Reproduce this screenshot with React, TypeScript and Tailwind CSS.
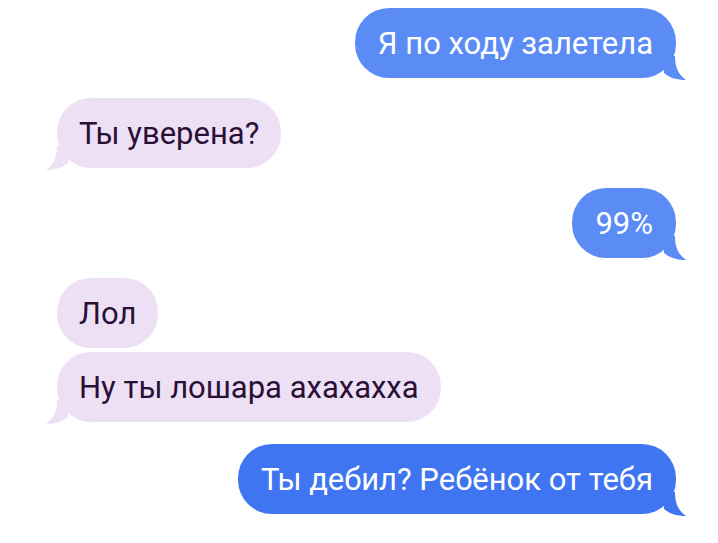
import React from "react";

const BLUE = "#5b8cf5";

function TailRight({ color }: { color: string }) {
  return (
    <svg
      className="absolute right-[-11px] bottom-[-2px]"
      width="24"
      height="24"
      viewBox="0 0 24 24"
    >
      <path d="M0 0 L12 0 C12 11 15 18 23 24 C14 24 7 22 1 17 Z" fill={color} />
    </svg>
  );
}

function TailLeft({ color }: { color: string }) {
  return (
    <svg
      className="absolute left-[-12px] bottom-[-2px] -scale-x-100"
      width="24"
      height="24"
      viewBox="0 0 24 24"
    >
      <path d="M0 0 L12 0 C12 11 15 18 23 24 C14 24 7 22 1 17 Z" fill={color} />
    </svg>
  );
}

function Out({ text, color, tail = true }: { text: string; color: string; tail?: boolean }) {
  return (
    <div className="flex justify-end pr-[42px]">
      <div
        className="relative h-[70px] rounded-[34px] px-[23px] flex items-center text-white text-[31px] leading-none"
        style={{ backgroundColor: color }}
      >
        <span className="relative z-10">{text}</span>
        {tail && <TailRight color={color} />}
      </div>
    </div>
  );
}

function In({ text, tail = true }: { text: string; tail?: boolean }) {
  return (
    <div className="flex justify-start pl-[57px]">
      <div className="relative h-[70px] rounded-[34px] px-[22px] flex items-center bg-[#ede0f4] text-[#2a0f36] text-[31px] leading-none">
        <span className="relative z-10">{text}</span>
        {tail && <TailLeft color="#ede0f4" />}
      </div>
    </div>
  );
}

export default function App() {
  return (
    <div
      className="w-[718px] h-[543px] bg-white overflow-hidden flex flex-col pt-[8px]"
      style={{ fontFamily: "Roboto, 'Noto Sans', sans-serif" }}
    >
      <Out text="Я по ходу залетела" color={BLUE} />
      <div className="h-[20px]" />
      <In text="Ты уверена?" />
      <div className="h-[20px]" />
      <Out text="99%" color={BLUE} />
      <div className="h-[20px]" />
      <In text="Лол" tail={false} />
      <div className="h-[4px]" />
      <In text="Ну ты лошара ахахахха" />
      <div className="h-[22px]" />
      <Out text="Ты дебил? Ребёнок от тебя" color="#4075f2" />
    </div>
  );
}
